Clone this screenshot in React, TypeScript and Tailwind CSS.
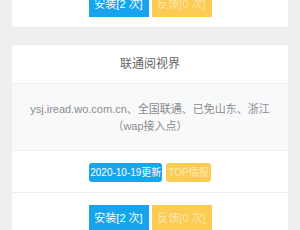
const items = [
  {
    title: '联通阅视界',
    lines: ['ysj.iread.wo.com.cn、全国联通、已免山东、浙江', '（wap接入点）'],
    date: '2020-10-19更新',
    tag: 'TOP情报',
    installs: 2,
    feedback: 0,
  },
  {
    title: '联通阅视界',
    lines: ['ysj.iread.wo.com.cn、全国联通、已免山东、浙江', '（wap接入点）'],
    date: '2020-10-19更新',
    tag: 'TOP情报',
    installs: 2,
    feedback: 0,
  },
  {
    title: '联通沃阅读',
    lines: ['iread.wo.com.cn、全国联通', '（wap接入点）'],
    date: '2020-10-19更新',
    tag: 'TOP情报',
    installs: 1,
    feedback: 0,
  },
]

type Item = (typeof items)[number]

function Card({ item }: { item: Item }) {
  return (
    <div className="bg-white border border-[#ededed] rounded-[2px]">
      <div className="h-[39px] flex items-center justify-center text-[12px] text-[#666] border-b border-[#eeeeee]">
        {item.title}
      </div>
      <div className="bg-[#f8f9fb] pt-[17px] pb-[15px] text-center text-[11px] leading-[17px] text-[#8c8c8c] border-b border-[#eeeeee]">
        {item.lines.map((l) => (
          <div key={l}>{l}</div>
        ))}
      </div>
      <div className="flex justify-center gap-[4px] pt-[12px] pb-[10px] border-b border-[#eeeeee]">
        <span className="h-[19px] px-[1px] flex items-center rounded-[3px] bg-[#19a5ec] text-white text-[10px]">
          {item.date}
        </span>
        <span className="h-[19px] px-[2px] flex items-center rounded-[3px] bg-[#fbcc55] text-[#fde9b4] text-[10px]">
          {item.tag}
        </span>
      </div>
      <div className="flex justify-center gap-[3px] pt-[12px] pb-[10px]">
        <button className="w-[60px] h-[26px] bg-[#17a4ec] text-white text-[11px]">
          安装[{item.installs} 次]
        </button>
        <button className="w-[60px] h-[26px] bg-[#fbcb52] text-[#fde7ae] text-[11px]">
          反馈[{item.feedback} 次]
        </button>
      </div>
    </div>
  )
}

export default function App() {
  return (
    <div
      className="min-h-screen bg-[#efefef] px-[11px] overflow-hidden"
      style={{ fontFamily: '"Liberation Sans", "Noto Sans CJK SC", sans-serif' }}
    >
      <div className="-mt-[170px] flex flex-col gap-[16px]">
        {items.map((it, i) => (
          <Card key={i} item={it} />
        ))}
      </div>
    </div>
  )
}
